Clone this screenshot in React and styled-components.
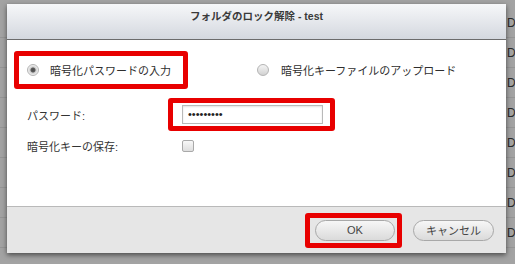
import React from 'react';
import styled, { createGlobalStyle } from 'styled-components';

const GlobalStyle = createGlobalStyle`
  body {
    margin: 0;
    font-family: 'Liberation Sans', 'Noto Sans CJK JP', sans-serif;
    color: #333;
  }
`;

const Page = styled.div`
  position: relative;
  width: 515px;
  height: 264px;
  overflow: hidden;
  background: #a3a3a3;
`;

const BackTable = styled.div`
  display: flex;
  flex-direction: column;
  padding-top: 8px;
`;

const BackRow = styled.div`
  height: 29px;
  border-bottom: 1px solid #959595;
  display: flex;
  justify-content: flex-end;
  align-items: center;
  font-size: 12px;
  color: #2a2a2a;
  & > span {
    width: 8px;
  }
`;

const Dialog = styled.div`
  position: absolute;
  left: 7px;
  top: 4px;
  width: 499px;
  display: flex;
  flex-direction: column;
  box-shadow: 0 2px 5px rgba(0, 0, 0, 0.55);
`;

const Header = styled.div`
  height: 35px;
  border-bottom: 1px solid #6c6c6c;
  background: linear-gradient(#f6f7f9, #d4d8df);
  text-align: center;
  font-size: 10.5px;
  font-weight: bold;
  line-height: 25px;
  color: #3a3a3a;
`;

const Body = styled.div`
  height: 155px;
  background: #fff;
  padding: 11px 0 0 7px;
  display: flex;
  flex-direction: column;
`;

const Footer = styled.div`
  height: 46px;
  border-top: 1px solid #b9b9b9;
  background: #e6e6e6;
  display: flex;
  justify-content: flex-end;
  align-items: center;
  gap: 11px;
  padding-right: 12px;
`;

const Highlight = styled.div`
  border: 5px solid #e80000;
  border-radius: 3px;
  display: flex;
  align-items: center;
  padding: ${p => p.$pad || '0'};
  width: ${p => p.$width || 'auto'};
  height: ${p => p.$height || 'auto'};
  box-sizing: border-box;
`;

const OptionRow = styled.div`
  display: flex;
  align-items: center;
`;

const Option = styled.label`
  display: flex;
  align-items: center;
  gap: ${p => p.$gap || '11px'};
  font-size: 11px;
  color: #2e2e2e;
  margin-left: ${p => p.$offset || '0'};
`;

const Radio = styled.span`
  width: 10px;
  height: 10px;
  border-radius: 50%;
  border: 1px solid #b4b4b4;
  background: ${p => (p.$checked
    ? 'radial-gradient(circle, #4a4a4a 0, #5a5a5a 2px, #cfcfcf 3px, #f2f2f2 5px)'
    : 'linear-gradient(#f4f4f4, #d2d2d2)')};
  flex-shrink: 0;
`;

const FieldRow = styled.div`
  display: flex;
  align-items: center;
  padding-left: 13px;
  margin-top: ${p => p.$top || '0'};
`;

const Label = styled.span`
  width: 141px;
  font-size: 11px;
  color: #333;
`;

const Input = styled.div`
  width: 141px;
  height: 19px;
  box-sizing: border-box;
  border: 1px solid #b9b9b9;
  box-shadow: inset 0 1px 2px rgba(0, 0, 0, 0.12);
  background: #fff;
  font-size: 11px;
  line-height: 17px;
  padding-left: 5px;
  color: #222;
`;

const Checkbox = styled.span`
  width: 10px;
  height: 10px;
  margin-left: 14px;
  border: 1px solid #a9a9a9;
  border-radius: 2px;
  background: linear-gradient(#f8f8f8, #dedede);
`;

const Button = styled.button`
  width: ${p => p.$width || '80px'};
  height: 21px;
  border-radius: 11px;
  border: 1px solid #a8a8a8;
  background: linear-gradient(#f7f7f7, #dadada);
  font-family: 'Liberation Sans', 'Noto Sans CJK JP', sans-serif;
  font-size: 11px;
  color: #444;
  padding: 0;
  display: flex;
  align-items: center;
  justify-content: center;
`;

export default function App() {
  return (
    <Page>
      <GlobalStyle />
      <BackTable>
        {Array.from({ length: 8 }).map((_, i) => (
          <BackRow key={i}><span>D</span></BackRow>
        ))}
      </BackTable>
      <Dialog>
        <Header>フォルダのロック解除 - test</Header>
        <Body>
          <OptionRow>
            <Highlight $width="174px" $height="38px" $pad="0 0 0 8px">
              <Option>
                <Radio $checked />
                暗号化パスワードの入力
              </Option>
            </Highlight>
            <Option $offset="69px" $gap="12px">
              <Radio />
              暗号化キーファイルのアップロード
            </Option>
          </OptionRow>
          <FieldRow $top="9px">
            <Label>パスワード:</Label>
            <Highlight $width="167px" $height="33px" $pad="0 7px 0 9px">
              <Input>•••••••••</Input>
            </Highlight>
          </FieldRow>
          <FieldRow $top="7px">
            <Label>暗号化キーの保存:</Label>
            <Checkbox />
          </FieldRow>
        </Body>
        <Footer>
          <Highlight $width="97px" $height="35px" $pad="0 0 0 5px">
            <Button>OK</Button>
          </Highlight>
          <Button $width="81px">キャンセル</Button>
        </Footer>
      </Dialog>
    </Page>
  );
}
